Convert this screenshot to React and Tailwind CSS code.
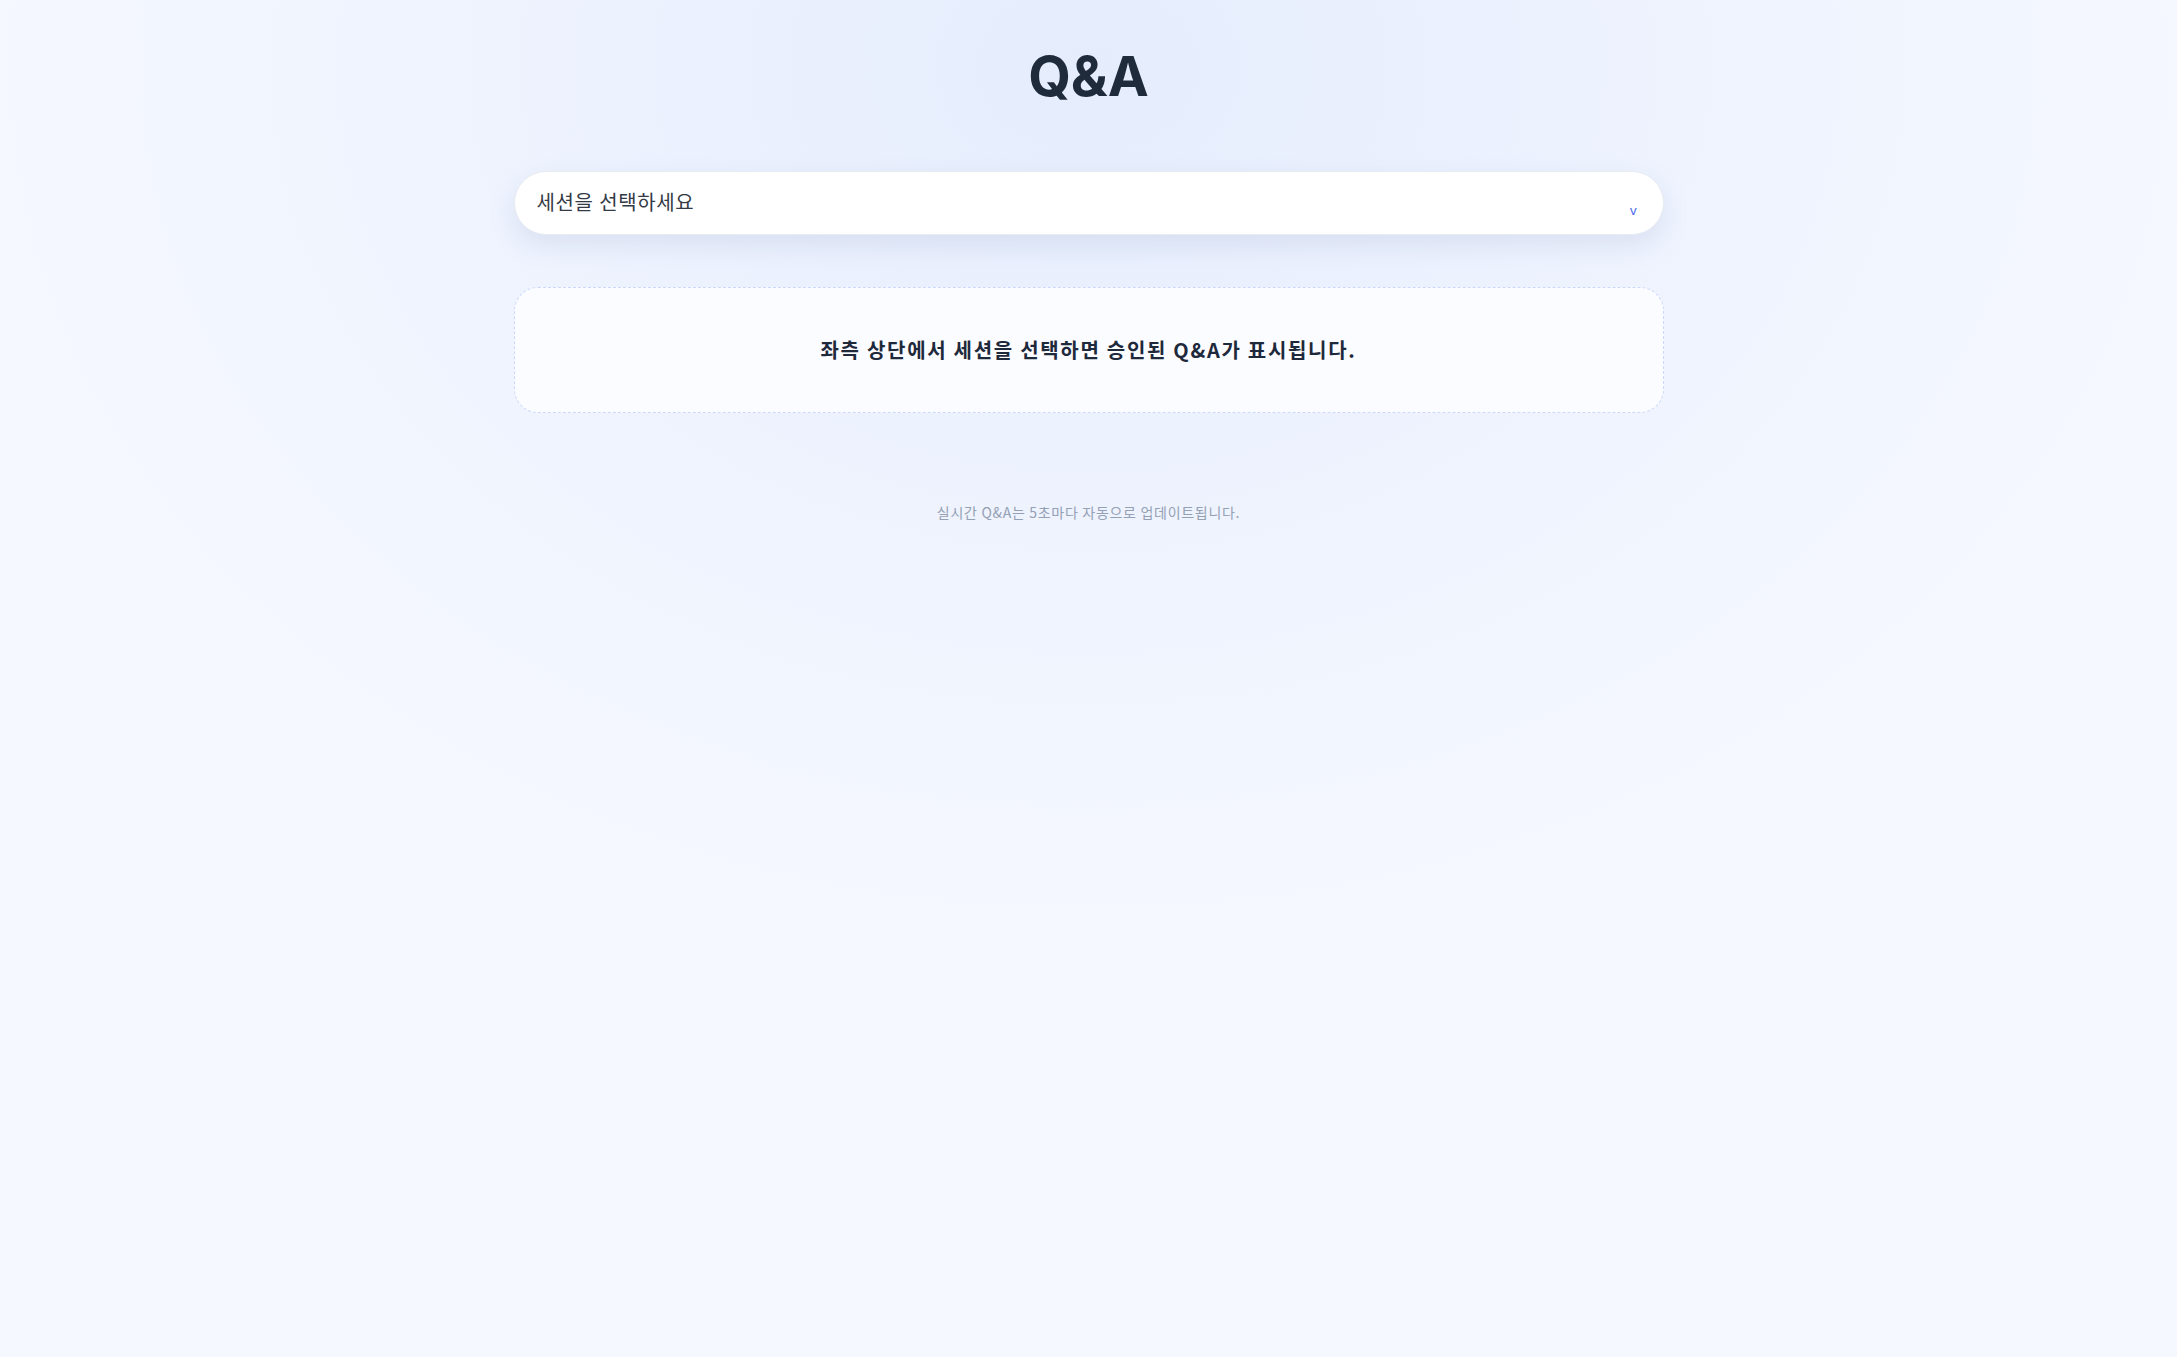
export default function App() {
  return (
    <div className="min-h-screen bg-[#f5f8ff] bg-[radial-gradient(ellipse_60%_75%_at_50%_5%,#e5edfd_0%,#eef3fe_45%,#f5f8ff_85%)] font-['Noto_Sans','Noto_Sans_CJK_KR',sans-serif]">
      <div className="mx-auto w-[1150px] pt-[44px]">
        <h1 className="text-center text-[55px] leading-[64px] font-bold text-[#1f2a3b] font-['Inter','Noto_Sans_CJK_KR',sans-serif]">
          Q&amp;A
        </h1>

        <div className="mt-[63px] h-[64px] rounded-full bg-white border border-[#e8ecf3] shadow-[0_10px_24px_rgba(148,163,200,0.22)] flex items-center justify-between pl-[22px] pr-[26px]">
          <span className="text-[20px] tracking-[0.03em] text-[#333a45]">세션을 선택하세요</span>
          <span className="text-[13px] leading-none text-[#4c63f0] mt-[14px]">v</span>
        </div>

        <div className="mt-[52px] h-[126px] rounded-[24px] border border-dashed border-[#cbd8fb] bg-[#fbfcff] flex items-center justify-center">
          <p className="text-[20px] font-bold tracking-[0.085em] text-[#1e293b] font-['Noto_Sans_CJK_KR',sans-serif]">
            좌측 상단에서 세션을 선택하면 승인된 Q&amp;A가 표시됩니다.
          </p>
        </div>

        <p className="mt-[89px] text-center text-[14px] tracking-[0.05em] text-[#94a0b4] font-['Noto_Sans_CJK_KR',sans-serif]">
          실시간 Q&amp;A는 5초마다 자동으로 업데이트됩니다.
        </p>
      </div>
    </div>
  )
}
